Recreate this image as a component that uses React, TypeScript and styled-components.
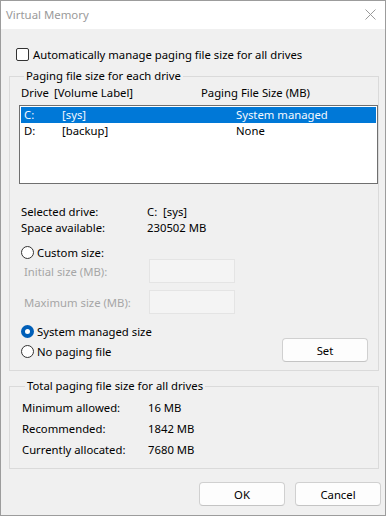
import styled, { createGlobalStyle } from 'styled-components';

const GlobalStyle = createGlobalStyle`
  html, body {
    margin: 0;
    padding: 0;
    background: #ffffff;
  }
  body {
    font-family: 'Noto Sans', 'Segoe UI', sans-serif;
    font-size: 11.3px;
    color: #000;
  }
`;

const Window = styled.div`
  width: 386px;
  height: 516px;
  box-sizing: border-box;
  border: 1px solid #9c9c9c;
  background: #f0f0f0;
  display: flex;
  flex-direction: column;
  overflow: hidden;
`;

const TitleBar = styled.div`
  height: 27px;
  flex-shrink: 0;
  background: #ffffff;
  display: flex;
  align-items: center;
  justify-content: space-between;
  padding: 0 5px 1px 5px;
`;

const Title = styled.span`
  color: #9a9a9a;
  font-size: 11.4px;
`;

const CloseGlyph = styled.svg`
  width: 11px;
  height: 11px;
  margin-right: 4px;
`;

const Body = styled.div`
  display: flex;
  flex-direction: column;
  padding: 17px 0 0 0;
`;

const CheckRow = styled.label`
  display: flex;
  align-items: center;
  height: 16px;
  margin-left: 15px;
  gap: 4px;
`;

const CheckBox = styled.span`
  width: 11px;
  height: 11px;
  border: 1px solid #333333;
  border-radius: 2px;
  background: #ffffff;
`;

const Group = styled.fieldset<{ $padLeft: number; $gap: number }>`
  margin: ${(p) => p.$gap}px 0 0 8px;
  width: 370px;
  box-sizing: border-box;
  border: 1px solid #dadada;
  padding: 0 0 8px ${(p) => p.$padLeft}px;
  min-width: 0;
`;

const Legend = styled.legend`
  padding: 0 2px;
  margin-left: 5px;
  line-height: 14px;
`;

const Header = styled.div`
  display: grid;
  grid-template-columns: 33px 147px 1fr;
  height: 14px;
  line-height: 14px;
  margin-top: 3px;
  padding-left: 2px;
`;

const ListBox = styled.div`
  margin-top: 5px;
  height: 79px;
  box-sizing: border-box;
  border: 1px solid #6f6f6f;
  background: #ffffff;
  padding: 1px;
`;

const ListRow = styled.div<{ $selected?: boolean }>`
  display: grid;
  grid-template-columns: 38px 174px 1fr;
  height: 16px;
  line-height: 16px;
  padding-left: 3px;
  background: ${(p) => (p.$selected ? '#0078d7' : 'transparent')};
  color: ${(p) => (p.$selected ? '#f4f9ff' : '#000000')};
`;

const InfoRow = styled.div<{ $top?: number; $height?: number }>`
  display: grid;
  grid-template-columns: 126px 1fr;
  height: ${(p) => p.$height ?? 16}px;
  align-items: center;
  margin-top: ${(p) => p.$top ?? 0}px;
  padding-left: 2px;
`;

const RadioRow = styled.label<{ $top?: number; $bottom?: number }>`
  display: flex;
  align-items: center;
  gap: 3px;
  height: 14px;
  margin-top: ${(p) => p.$top ?? 0}px;
  margin-bottom: ${(p) => p.$bottom ?? 0}px;
  padding-left: 2px;
`;

const Radio = styled.span<{ $checked?: boolean }>`
  width: 13px;
  height: 13px;
  box-sizing: border-box;
  border-radius: 50%;
  border: ${(p) => (p.$checked ? '4px solid #005fb8' : '1px solid #333333')};
  background: #ffffff;
`;

const FieldRow = styled.div<{ $top?: number }>`
  display: grid;
  grid-template-columns: 125px 86px;
  align-items: center;
  height: 24px;
  margin-top: ${(p) => p.$top ?? 0}px;
  padding-left: 5px;
  color: #a6a6a6;
`;

const Field = styled.div`
  height: 24px;
  box-sizing: border-box;
  border: 1px solid #e4e4e4;
  background: #f4f4f4;
`;

const BottomRow = styled.div`
  display: flex;
  align-items: flex-end;
  justify-content: space-between;
  padding-right: 10px;
`;

const Button = styled.button`
  width: 86px;
  height: 24px;
  box-sizing: border-box;
  border: 1px solid #d0d0d0;
  border-bottom-color: #c4c4c4;
  border-radius: 4px;
  background: #fdfdfd;
  font-family: inherit;
  font-size: 11.3px;
  color: #000;
  padding: 0;
`;

const Footer = styled.div`
  display: flex;
  justify-content: flex-end;
  gap: 10px;
  margin-top: 13px;
  padding-right: 4px;
`;

export default function App() {
  return (
    <Window>
      <GlobalStyle />
      <TitleBar>
        <Title>Virtual Memory</Title>
        <CloseGlyph viewBox="0 0 11 11">
          <path d="M0.5 0.5 L10.5 10.5 M10.5 0.5 L0.5 10.5" stroke="#9a9a9a" strokeWidth="1" fill="none" />
        </CloseGlyph>
      </TitleBar>
      <Body>
        <CheckRow>
          <CheckBox />
          Automatically manage paging file size for all drives
        </CheckRow>

        <Group $padLeft={9} $gap={7}>
          <Legend>Paging file size for each drive</Legend>
          <Header>
            <span>Drive</span>
            <span>[Volume Label]</span>
            <span>Paging File Size (MB)</span>
          </Header>
          <ListBox>
            <ListRow $selected>
              <span>C:</span>
              <span>[sys]</span>
              <span>System managed</span>
            </ListRow>
            <ListRow>
              <span>D:</span>
              <span>[backup]</span>
              <span>None</span>
            </ListRow>
          </ListBox>

          <InfoRow $top={19}>
            <span>Selected drive:</span>
            <span>C:&nbsp; [sys]</span>
          </InfoRow>
          <InfoRow>
            <span>Space available:</span>
            <span>230502 MB</span>
          </InfoRow>

          <RadioRow $top={10}>
            <Radio />
            Custom size:
          </RadioRow>
          <FieldRow>
            <span>Initial size (MB):</span>
            <Field />
          </FieldRow>
          <FieldRow $top={7}>
            <span>Maximum size (MB):</span>
            <Field />
          </FieldRow>

          <RadioRow $top={10}>
            <Radio $checked />
            System managed size
          </RadioRow>
          <BottomRow>
            <RadioRow $bottom={4}>
              <Radio />
              No paging file
            </RadioRow>
            <Button>Set</Button>
          </BottomRow>
        </Group>

        <Group $padLeft={10} $gap={8}>
          <Legend>Total paging file size for all drives</Legend>
          <InfoRow $top={4} $height={21}>
            <span>Minimum allowed:</span>
            <span>16 MB</span>
          </InfoRow>
          <InfoRow $height={21}>
            <span>Recommended:</span>
            <span>1842 MB</span>
          </InfoRow>
          <InfoRow $height={21}>
            <span>Currently allocated:</span>
            <span>7680 MB</span>
          </InfoRow>
        </Group>

        <Footer>
          <Button>OK</Button>
          <Button>Cancel</Button>
        </Footer>
      </Body>
    </Window>
  );
}
